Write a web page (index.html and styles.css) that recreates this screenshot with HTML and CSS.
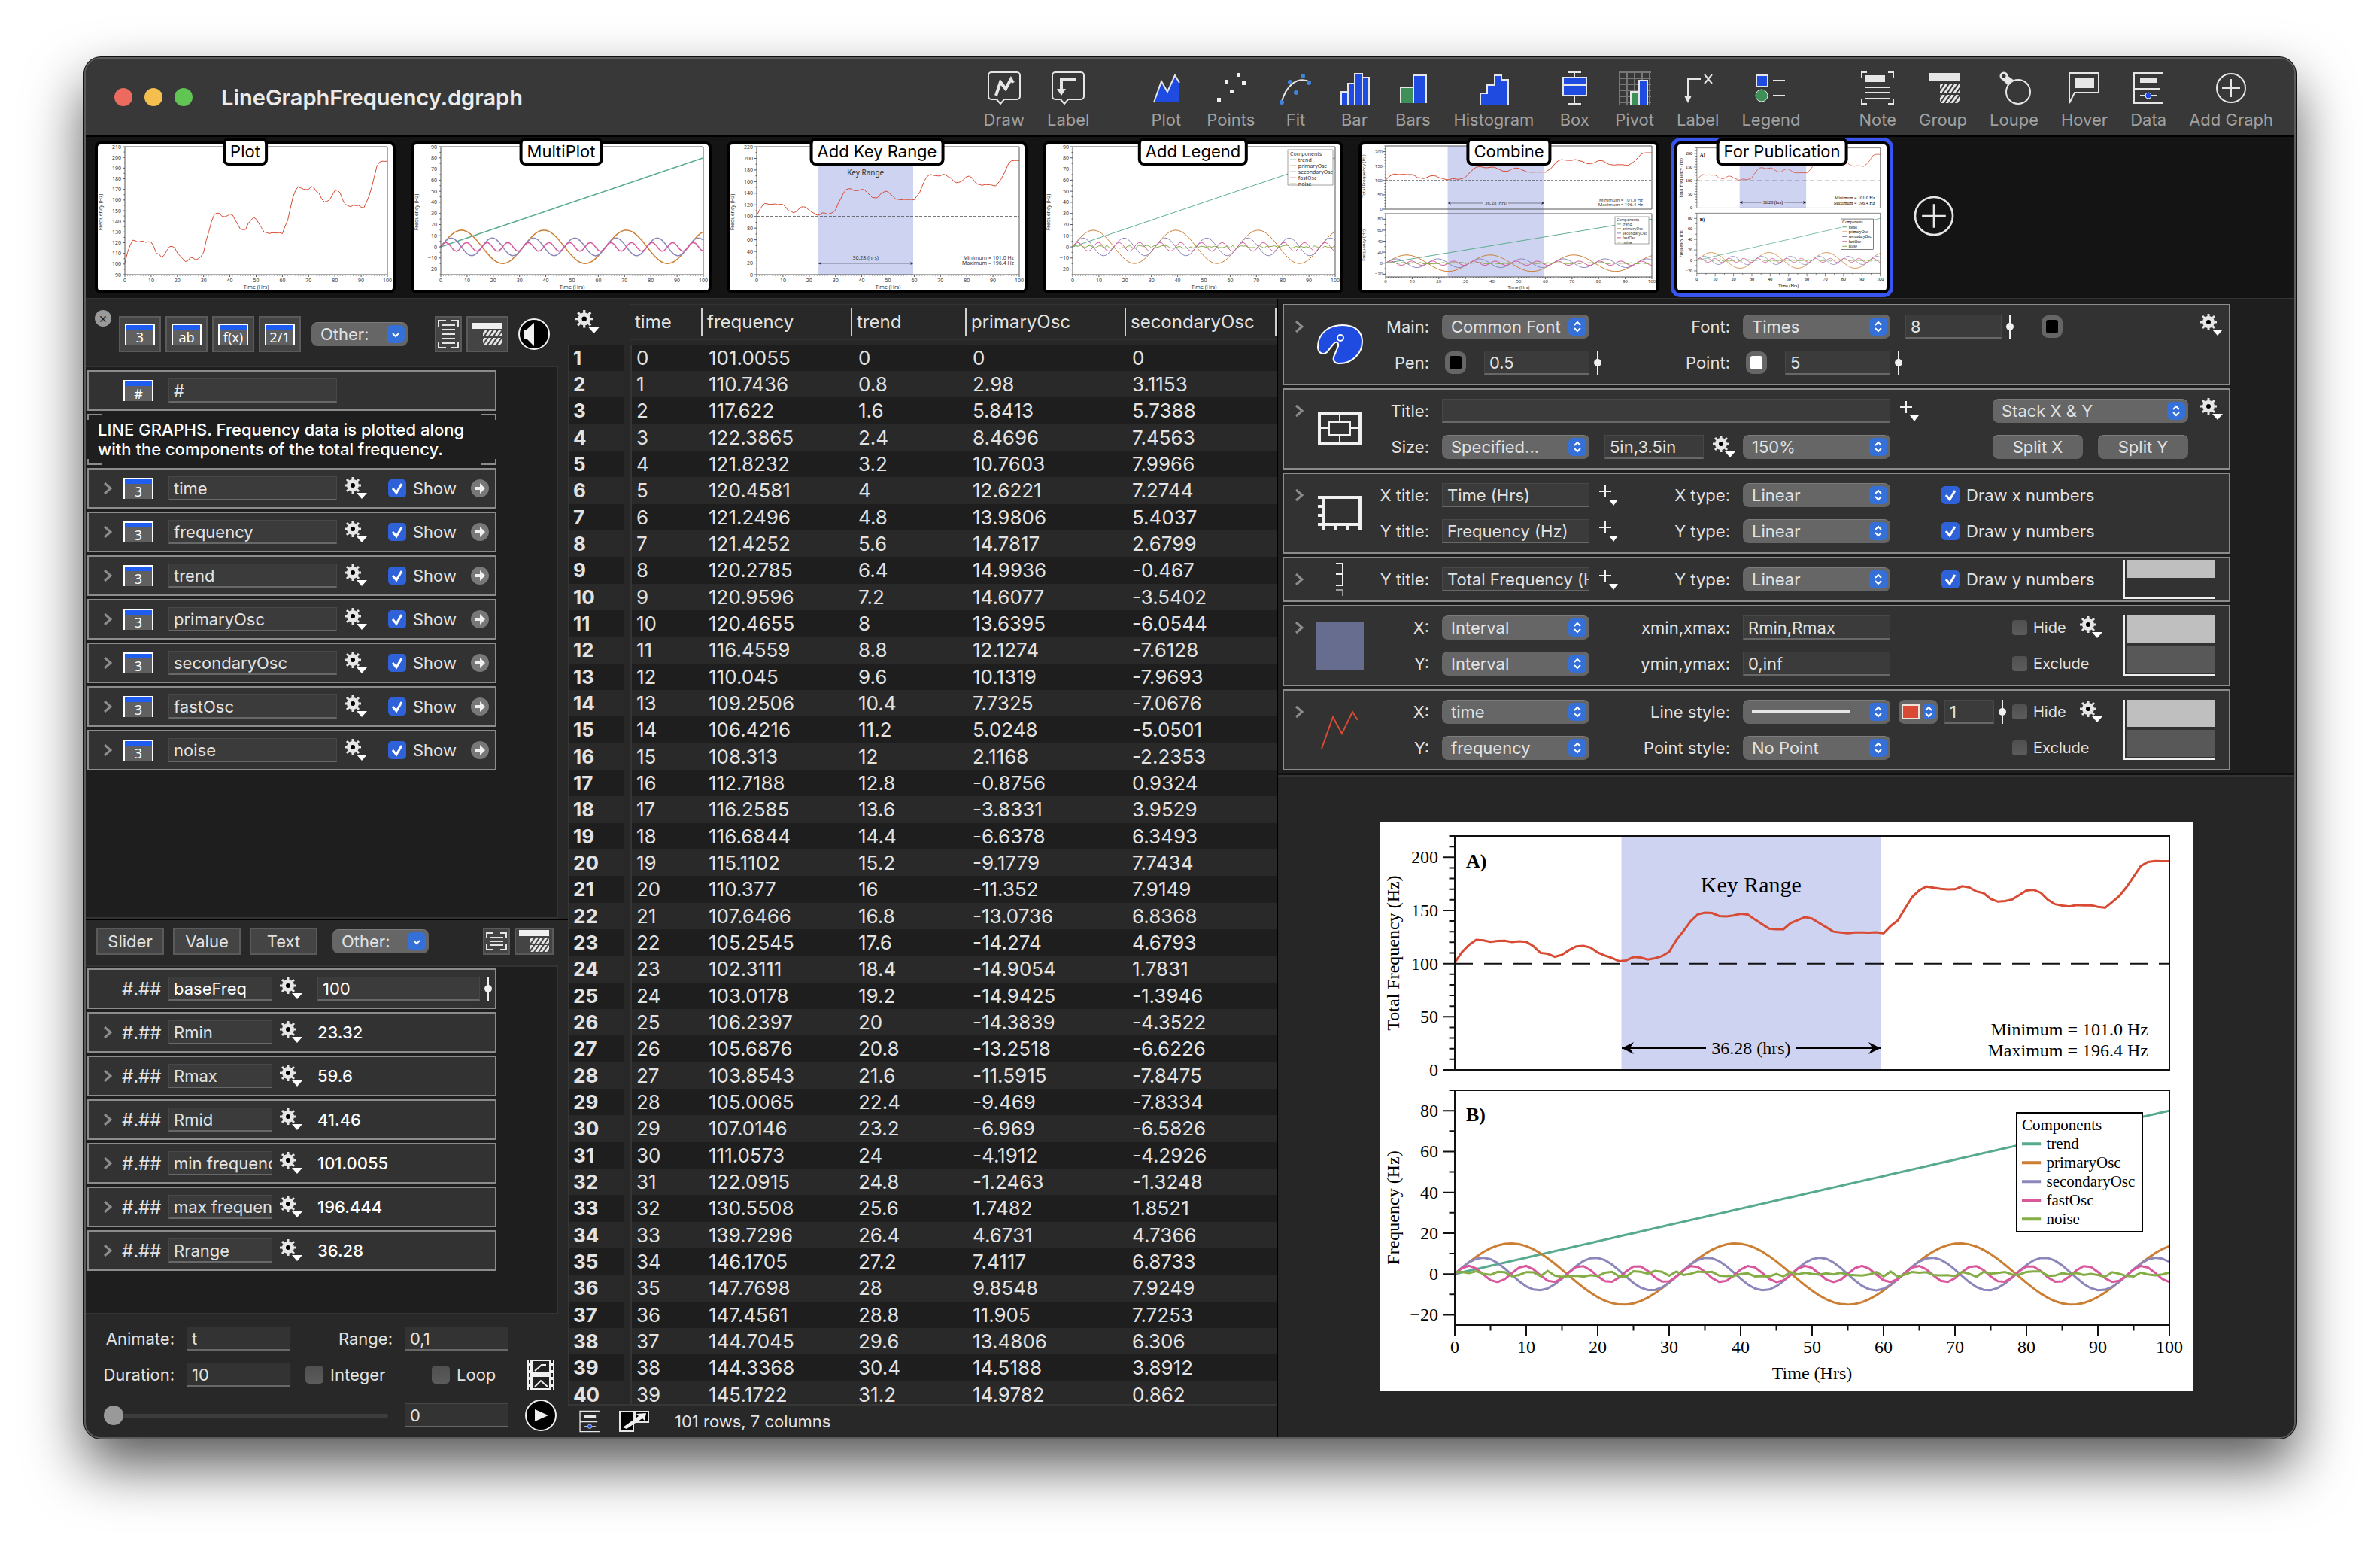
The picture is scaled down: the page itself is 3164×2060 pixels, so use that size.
FILE: index.html
```html
<!DOCTYPE html>
<html lang="en">
<head>
	<meta charset="utf-8">
	<meta name="viewport" content="width=device-width, initial-scale=1">
	<title>LineGraphFrequency.dgraph</title>
	<link rel="stylesheet" href="styles.css">
</head>
<body>

<!-- Icon library, used all over the place with <use> -->
<svg class="library" width="0" height="0">
	<defs>
		<pattern id="hatch" width="5" height="5" patternUnits="userSpaceOnUse" patternTransform="rotate(35)">
			<rect width="3" height="5" fill="#e6e6e6"/>
		</pattern>
	</defs>
	<symbol id="i-draw" viewBox="0 0 44 44">
		<path d="M5 1H39a4 4 0 0 1 4 4V33a4 4 0 0 1-4 4H22l-5 6-5-6H5a4 4 0 0 1-4-4V5a4 4 0 0 1 4-4z" fill="none" stroke="#e6e6e6" stroke-width="2"/>
		<path d="M11 32L17 14l7 9 7-13 3 5" fill="none" stroke="#e6e6e6" stroke-width="4"/>
	</symbol>
	<symbol id="i-callout" viewBox="0 0 44 44">
		<path d="M5 1H39a4 4 0 0 1 4 4V33a4 4 0 0 1-4 4H22l-5 6-5-6H5a4 4 0 0 1-4-4V5a4 4 0 0 1 4-4z" fill="none" stroke="#e6e6e6" stroke-width="2"/>
		<path d="M32 11H13V25" fill="none" stroke="#e6e6e6" stroke-width="4"/>
		<path d="M7 23H19L13 32z" fill="#e6e6e6"/>
	</symbol>
	<symbol id="i-plot" viewBox="0 0 44 44">
		<path d="M6 41L16 13l8 14L34 5l6 10V41z" fill="#1f4be0"/>
		<path d="M6 41L16 13l8 14L34 5l6 10" fill="none" stroke="#e6e6e6" stroke-width="2"/>
	</symbol>
	<symbol id="i-points" viewBox="0 0 44 44">
		<path d="M30 2h5v5h-5zM14 11h5v5h-5zM37 13h5v5h-5zM21 24h5v5h-5zM4 35h5v5h-5z" fill="#f0f0f0"/>
	</symbol>
	<symbol id="i-fit" viewBox="0 0 44 44">
		<path d="M3 43C10 16 26 6 42 14" fill="none" stroke="#e6e6e6" stroke-width="2"/>
		<g fill="#3f85e0"><circle cx="32" cy="6" r="3"/><circle cx="15" cy="14" r="3"/><circle cx="23" cy="28" r="3"/><circle cx="4" cy="41" r="3"/><circle cx="40" cy="15" r="3"/></g>
	</symbol>
	<symbol id="i-bar" viewBox="0 0 44 44">
		<path d="M5 44V27h9v17M14 44V16h9v28M23 44V3h10v41M33 44V8h9v36" fill="#1f4be0" stroke="#e6e6e6" stroke-width="2"/>
	</symbol>
	<symbol id="i-bars" viewBox="0 0 44 44">
		<path d="M6 42V21H23v21" fill="#3f8f58" stroke="#e6e6e6" stroke-width="2"/>
		<path d="M23 42V5H40v37" fill="#1f4be0" stroke="#e6e6e6" stroke-width="2"/>
	</symbol>
	<symbol id="i-histogram" viewBox="0 0 44 44">
		<path d="M4 44V29h9V18h10V5h9v6h9v33" fill="#1f4be0" stroke="#e6e6e6" stroke-width="2"/>
	</symbol>
	<symbol id="i-box" viewBox="0 0 44 44">
		<path d="M14 1H31M22 1V8M22 32V43M14 43H31" stroke="#e6e6e6" stroke-width="2"/>
		<path d="M7 8H38V32H7zM7 18H38" fill="#1f4be0" stroke="#e6e6e6" stroke-width="2"/>
	</symbol>
	<symbol id="i-pivot" viewBox="0 0 44 44">
		<path d="M2 0V44M12 0V44M22 0V44M32 0V44M42 0V44M2 1H44M2 9H44M2 17H44M2 25H44M2 33H44M2 41H44" stroke="#777" stroke-width="2"/>
		<path d="M17 44V27H28v17" fill="#3f8f58" stroke="#e6e6e6" stroke-width="2"/>
		<path d="M28 44V12H39v32" fill="#1f4be0" stroke="#e6e6e6" stroke-width="2"/>
	</symbol>
	<symbol id="i-axis-label" viewBox="0 0 44 44">
		<path d="M26 10H9V33" fill="none" stroke="#e6e6e6" stroke-width="2"/>
		<path d="M4 32H14L9 42z" fill="#e6e6e6"/>
		<path d="M31 4L41 16M41 4L31 16" stroke="#e6e6e6" stroke-width="2"/>
	</symbol>
	<symbol id="i-legend" viewBox="0 0 44 44">
		<path d="M3 5H18V20H3z" fill="#1f4be0" stroke="#e6e6e6" stroke-width="2"/>
		<circle cx="10" cy="32" r="8" fill="#3f8f58" stroke="#e6e6e6" stroke-width="1"/>
		<path d="M25 12H41M25 32H41" stroke="#e6e6e6" stroke-width="2"/>
	</symbol>
	<symbol id="i-note" viewBox="0 0 44 44">
		<path d="M1 8V1H8M36 1h7V8M1 36v7H8M43 36v7H36" fill="none" stroke="#e6e6e6" stroke-width="2"/>
		<path d="M6 5H32V14H6z" fill="#e6e6e6"/>
		<path d="M6 21H38M6 28H38M6 36H38" stroke="#e6e6e6" stroke-width="2"/>
	</symbol>
	<symbol id="i-group" viewBox="0 0 44 44">
		<path d="M3 2H44V13H3z" fill="#e6e6e6"/>
		<path d="M18 17H44V28H18zM18 31H44V42H18z" fill="url(#hatch)"/>
	</symbol>
	<symbol id="i-loupe" viewBox="0 0 44 44">
		<path d="M4 9L14 19L22 12L12 5z" fill="#e6e6e6"/>
		<circle cx="8" cy="6" r="4" fill="#383838" stroke="#e6e6e6" stroke-width="3"/>
		<circle cx="27" cy="27" r="16" fill="#383838" stroke="#e6e6e6" stroke-width="2"/>
	</symbol>
	<symbol id="i-hover" viewBox="0 0 44 44">
		<path d="M2 42V2H41V28H9z" fill="none" stroke="#e6e6e6" stroke-width="2"/>
		<path d="M10 9H35V22H10z" fill="#e6e6e6"/>
	</symbol>
	<symbol id="i-data" viewBox="0 0 44 44">
		<path d="M41 2H3V42H41M3 23H37M11 32H34" fill="none" stroke="#e6e6e6" stroke-width="2"/>
		<path d="M11 9H34V15H11z" fill="#e6e6e6"/>
		<circle cx="22" cy="32" r="4" fill="#1f4be0" stroke="#e6e6e6"/>
	</symbol>
	<symbol id="i-add" viewBox="0 0 44 44">
		<circle cx="22" cy="22" r="19" fill="none" stroke="#e6e6e6" stroke-width="2"/>
		<path d="M10 22H34M22 10V34" stroke="#e6e6e6" stroke-width="2"/>
	</symbol>
	<symbol id="i-gear" viewBox="0 0 30 30">
		<path d="M11 0V22M0 11H22M3 3L19 19M19 3L3 19" stroke="#e6e6e6" stroke-width="3"/>
		<circle cx="11" cy="11" r="8" fill="#e6e6e6"/>
		<circle cx="11" cy="11" r="3" fill="#000"/>
		<path d="M16 21H30L23 29z" fill="#fff"/>
	</symbol>
	<symbol id="i-plus" viewBox="0 0 26 28">
		<path d="M8 1V17M0 9H16" stroke="#f0f0f0" stroke-width="2"/>
		<path d="M13 20H25L19 28z" fill="#fff"/>
	</symbol>
	<symbol id="i-chevron" viewBox="0 0 12 18">
		<path d="M2 2L10 9L2 16" fill="none" stroke="#8c8c8c" stroke-width="3"/>
	</symbol>
	<symbol id="i-handle" viewBox="0 0 12 32">
		<path d="M6 0V32" stroke="#f0f0f0" stroke-width="2"/>
		<circle cx="6" cy="16" r="5" fill="#f0f0f0"/>
	</symbol>
	<symbol id="i-goto" viewBox="0 0 24 24">
		<circle cx="12" cy="12" r="12" fill="#787878"/>
		<path d="M6 10H12V5L19 12L12 19V14H6z" fill="#f0f0f0"/>
	</symbol>
	<symbol id="i-lines" viewBox="0 0 28 38">
		<path d="M1 9V1H11M17 1H27V9M1 29V37H11M17 37H27V29M5 7H23M5 13H23M5 19H23M5 25H23M5 31H23" fill="none" stroke="#e6e6e6" stroke-width="2"/>
	</symbol>
	<symbol id="i-lines-small" viewBox="0 0 28 24">
		<path d="M1 8V1H9M19 1H27V8M1 16V23H9M19 23H27V16M5 7H23M5 12H23M5 17H23" fill="none" stroke="#e6e6e6" stroke-width="2"/>
	</symbol>
	<symbol id="i-folder" viewBox="0 0 42 30">
		<path d="M1 0H41V8H1z" fill="#f0f0f0"/>
		<path d="M15 10H41V18H15zM15 20H41V29H15z" fill="url(#hatch)"/>
	</symbol>
	<symbol id="i-sound" viewBox="0 0 44 44">
		<circle cx="22" cy="22" r="20" fill="#000" stroke="#f0f0f0" stroke-width="2"/>
		<path d="M9 16H12L22 7V38L12 28H9z" fill="#f0f0f0"/>
	</symbol>
	<symbol id="i-play" viewBox="0 0 44 44">
		<circle cx="22" cy="22" r="20" fill="#000" stroke="#f0f0f0" stroke-width="2"/>
		<path d="M14 14L32 22L14 30z" fill="#f0f0f0"/>
	</symbol>
	<symbol id="i-film" viewBox="0 0 36 40">
		<path d="M0 0H36V40H0z" fill="#f0f0f0"/>
		<path d="M7 2H29V17H7zM7 23H29V38H7z" fill="#222"/>
		<path d="M2 0H4V5H2zM2 9H4V14H2zM2 18H4V23H2zM2 27H4V32H2zM2 36H4V40H2zM32 0H34V5H32zM32 9H34V14H32zM32 18H34V23H32zM32 27H34V32H32zM32 36H34V40H32z" fill="#222"/>
		<path d="M10 15L19 7H25M10 36L18 28L27 36" fill="none" stroke="#f0f0f0" stroke-width="2"/>
	</symbol>
	<symbol id="i-export" viewBox="0 0 40 28">
		<path d="M1 1H19V27H1zM21 1H39V15H21z" fill="#000" stroke="#e6e6e6" stroke-width="2"/>
		<path d="M5 22L26 7L23 4L36 3L34 13L31 10L10 24z" fill="#f0f0f0"/>
	</symbol>
</svg>

<div class="window">

	<header class="titlebar">
		<span class="light red"></span>
		<span class="light yellow"></span>
		<span class="light green"></span>
		<h1 class="doc-title">LineGraphFrequency.dgraph</h1>
		<nav class="tools">
			<div class="tool-group">
				<button class="tool"><svg><use href="#i-draw"/></svg>Draw</button>
				<button class="tool"><svg><use href="#i-callout"/></svg>Label</button>
			</div>
			<div class="tool-group">
				<button class="tool"><svg><use href="#i-plot"/></svg>Plot</button>
				<button class="tool"><svg><use href="#i-points"/></svg>Points</button>
				<button class="tool"><svg><use href="#i-fit"/></svg>Fit</button>
				<button class="tool"><svg><use href="#i-bar"/></svg>Bar</button>
				<button class="tool"><svg><use href="#i-bars"/></svg>Bars</button>
				<button class="tool"><svg><use href="#i-histogram"/></svg>Histogram</button>
				<button class="tool"><svg><use href="#i-box"/></svg>Box</button>
				<button class="tool"><svg><use href="#i-pivot"/></svg>Pivot</button>
				<button class="tool"><svg><use href="#i-axis-label"/></svg>Label</button>
				<button class="tool"><svg><use href="#i-legend"/></svg>Legend</button>
			</div>
			<div class="tool-group">
				<button class="tool"><svg><use href="#i-note"/></svg>Note</button>
				<button class="tool"><svg><use href="#i-group"/></svg>Group</button>
				<button class="tool"><svg><use href="#i-loupe"/></svg>Loupe</button>
				<button class="tool"><svg><use href="#i-hover"/></svg>Hover</button>
				<button class="tool"><svg><use href="#i-data"/></svg>Data</button>
				<button class="tool"><svg><use href="#i-add"/></svg>Add Graph</button>
			</div>
		</nav>
	</header>

	<div class="strip">
		<button class="thumb"><span class="thumb-name">Plot</span><svg id="thumb-plot" viewBox="0 0 392 194"></svg></button>
		<button class="thumb"><span class="thumb-name">MultiPlot</span><svg id="thumb-multi" viewBox="0 0 392 194"></svg></button>
		<button class="thumb"><span class="thumb-name">Add Key Range</span><svg id="thumb-range" viewBox="0 0 392 194"></svg></button>
		<button class="thumb"><span class="thumb-name">Add Legend</span><svg id="thumb-legend" viewBox="0 0 392 194"></svg></button>
		<button class="thumb"><span class="thumb-name">Combine</span><svg id="thumb-combine" viewBox="0 0 392 194"></svg></button>
		<button class="thumb selected"><span class="thumb-name">For Publication</span><svg id="thumb-final" viewBox="0 0 1080 756"></svg></button>
		<button class="add-thumb" aria-label="Add graph"><svg><use href="#i-add"/></svg></button>
	</div>

	<main class="panes">

		<!-- Left: columns, variables, animation -->
		<section class="side">
			<div class="side-bar tall">
				<button class="close" aria-label="Close">&#10005;</button>
				<button class="flat square"><span class="col-icon">3</span></button>
				<button class="flat square"><span class="col-icon">ab</span></button>
				<button class="flat square"><span class="col-icon">f(x)</span></button>
				<button class="flat square"><span class="col-icon">2/1</span></button>
				<select class="pull other" aria-label="Other column types"><option>Other:</option></select>
				<button class="flat narrow"><svg width="28" height="38"><use href="#i-lines"/></svg></button>
				<button class="flat square"><svg width="42" height="30"><use href="#i-folder"/></svg></button>
				<button class="bare sound"><svg width="44" height="44"><use href="#i-sound"/></svg></button>
			</div>
			<div class="list grow" id="columns">
				<div class="item">
					<span></span>
					<span class="col-icon">#</span>
					<input type="text" value="#" aria-label="Row number column">
				</div>
				<p class="note">LINE GRAPHS. Frequency data is plotted along with the components of the total frequency.</p>
			</div>

			<div class="side-bar short">
				<button class="flat text">Slider</button>
				<button class="flat text">Value</button>
				<button class="flat text">Text</button>
				<select class="pull other" aria-label="Other variable types"><option>Other:</option></select>
				<button class="flat narrow"><svg width="28" height="24"><use href="#i-lines-small"/></svg></button>
				<button class="flat medium"><svg width="42" height="30"><use href="#i-folder"/></svg></button>
			</div>
			<div class="list vars" id="variables">
				<div class="item">
					<span></span>
					<span class="hash">#.##</span>
					<input type="text" class="bright" value="baseFreq" aria-label="Variable name">
					<button class="bare gear"><svg width="30" height="30"><use href="#i-gear"/></svg></button>
					<input type="text" class="bright" value="100" aria-label="Variable value">
					<svg class="handle"><use href="#i-handle"/></svg>
				</div>
			</div>

			<div class="animate">
				<label for="an-var">Animate:</label>
				<input type="text" id="an-var" value="t">
				<label for="an-range">Range:</label>
				<input type="text" id="an-range" value="0,1">
				<span></span>
				<label for="an-time">Duration:</label>
				<input type="text" id="an-time" value="10">
				<div class="checks">
					<label class="check"><input type="checkbox">Integer</label>
					<label class="check"><input type="checkbox">Loop</label>
				</div>
				<button class="bare"><svg width="36" height="40"><use href="#i-film"/></svg></button>
				<input type="range" class="track" value="0" aria-label="Animation position">
				<input type="text" value="0" aria-label="Animation value">
				<button class="bare"><svg width="44" height="44"><use href="#i-play"/></svg></button>
			</div>
		</section>

		<!-- Middle: data table -->
		<section class="data">
			<div class="table-wrap">
				<table>
					<thead>
						<tr>
							<td><button class="bare"><svg width="32" height="32"><use href="#i-gear"/></svg></button></td>
							<th class="c-time"><span>time</span></th>
							<th class="c-freq"><span>frequency</span></th>
							<th class="c-trend"><span>trend</span></th>
							<th class="c-prim"><span>primaryOsc</span></th>
							<th class="c-sec"><span>secondaryOsc</span></th>
						</tr>
					</thead>
					<tbody id="rows"></tbody>
				</table>
			</div>
			<div class="status">
				<button class="bare"><svg width="30" height="30"><use href="#i-data"/></svg></button>
				<button class="bare"><svg width="40" height="28"><use href="#i-export"/></svg></button>
				<span>101 rows, 7 columns</span>
			</div>
		</section>

		<!-- Right: inspector and graph -->
		<section class="graph-pane">
			<div class="inspector">

				<div class="card">
					<button class="bare chevron"><svg width="12" height="18"><use href="#i-chevron"/></svg></button>
					<svg class="card-icon" width="62" height="54" viewBox="-1 -1 62 54">
						<path d="M34 0C52 0 60 10 60 22C60 38 46 51 30 51C22 51 20 46 23 40L28 28C29 23 25 21 22 25L13 36C9 40 1 38 1 29C1 12 14 0 34 0z" fill="#1f4be0" stroke="#fff" stroke-width="2"/>
						<circle cx="31" cy="17" r="4" fill="#1f4be0" stroke="#fff" stroke-width="2"/>
					</svg>
					<label class="l1" for="main">Main:</label>
					<select class="pull c1" id="main"><option>Common Font</option></select>
					<label class="l2" for="font">Font:</label>
					<select class="pull c2" id="font"><option>Times</option></select>
					<div class="rest">
						<input type="text" class="w128" value="8" aria-label="Font size">
						<svg class="handle"><use href="#i-handle"/></svg>
						<button class="well black" aria-label="Font colour"></button>
						<button class="bare corner"><svg width="30" height="30"><use href="#i-gear"/></svg></button>
					</div>
					<label class="l1 r2" for="pen">Pen:</label>
					<div class="c1 pair r2"><button class="well black" aria-label="Pen colour"></button><input type="text" id="pen" value="0.5"></div>
					<div class="l2 r2 with-tool"><svg class="handle"><use href="#i-handle"/></svg><label for="point">Point:</label></div>
					<div class="c2 pair r2"><button class="well white" aria-label="Point colour"></button><input type="text" id="point" value="5"></div>
					<div class="rest r2"><svg class="handle near"><use href="#i-handle"/></svg></div>
				</div>

				<div class="card">
					<button class="bare chevron"><svg width="12" height="18"><use href="#i-chevron"/></svg></button>
					<svg class="card-icon" width="58" height="44" viewBox="0 0 58 44">
						<path d="M2 2H56V42H2z" fill="none" stroke="#f0f0f0" stroke-width="4"/>
						<path d="M15 13H43V30H15zM29 2V13M29 30V42M2 21H15M43 21H56" fill="none" stroke="#f0f0f0" stroke-width="2"/>
					</svg>
					<label class="l1" for="title">Title:</label>
					<input type="text" class="wide" id="title" value="">
					<div class="rest">
						<svg class="plus near"><use href="#i-plus"/></svg>
						<select class="pull stack" aria-label="Layout"><option>Stack X &amp; Y</option></select>
						<button class="bare corner"><svg width="30" height="30"><use href="#i-gear"/></svg></button>
					</div>
					<label class="l1 r2" for="size">Size:</label>
					<select class="pull c1 r2" id="size"><option>Specified...</option></select>
					<div class="l2 r2 sizes"><input type="text" value="5in,3.5in" aria-label="Paper size"><button class="bare"><svg width="30" height="30"><use href="#i-gear"/></svg></button></div>
					<select class="pull c2 r2" aria-label="Zoom"><option>150%</option></select>
					<div class="rest r2 splits"><button class="push">Split X</button><button class="push">Split Y</button></div>
				</div>

				<div class="card">
					<button class="bare chevron"><svg width="12" height="18"><use href="#i-chevron"/></svg></button>
					<svg class="card-icon" width="58" height="46" viewBox="0 0 58 46">
						<path d="M8 2H56V46M8 0V46M0 38H58M0 2H8M0 14H8M0 26H8M24 38V46M40 38V46" fill="none" stroke="#f0f0f0" stroke-width="4"/>
					</svg>
					<label class="l1" for="xt">X title:</label>
					<input type="text" class="c1" id="xt" value="Time (Hrs)">
					<div class="l2 with-tool"><svg class="plus"><use href="#i-plus"/></svg><label for="xtype">X type:</label></div>
					<select class="pull c2" id="xtype"><option>Linear</option></select>
					<div class="rest"><label class="check far"><input type="checkbox" checked>Draw x numbers</label></div>
					<label class="l1 r2" for="yt">Y title:</label>
					<input type="text" class="c1 r2" id="yt" value="Frequency (Hz)">
					<div class="l2 r2 with-tool"><svg class="plus"><use href="#i-plus"/></svg><label for="ytype">Y type:</label></div>
					<select class="pull c2 r2" id="ytype"><option>Linear</option></select>
					<div class="rest r2"><label class="check far"><input type="checkbox" checked>Draw y numbers</label></div>
				</div>

				<div class="card single">
					<button class="bare chevron"><svg width="12" height="18"><use href="#i-chevron"/></svg></button>
					<svg class="card-icon" width="10" height="44" viewBox="0 0 10 44">
						<path d="M0 1H9V30H0M0 15H9" fill="none" stroke="#f0f0f0" stroke-width="2"/>
						<path d="M0 36H9V44" fill="none" stroke="#999" stroke-width="2"/>
					</svg>
					<label class="l1" for="yt2">Y title:</label>
					<input type="text" class="c1" id="yt2" value="Total Frequency (Hz)">
					<div class="l2 with-tool"><svg class="plus"><use href="#i-plus"/></svg><label for="ytype2">Y type:</label></div>
					<select class="pull c2" id="ytype2"><option>Linear</option></select>
					<div class="rest"><label class="check far"><input type="checkbox" checked>Draw y numbers</label></div>
					<div class="where"><i class="on"></i></div>
				</div>

				<div class="card">
					<button class="bare chevron"><svg width="12" height="18"><use href="#i-chevron"/></svg></button>
					<span class="card-icon swatch"></span>
					<label class="l1" for="ix">X:</label>
					<select class="pull c1" id="ix"><option>Interval</option></select>
					<label class="l2" for="xmm">xmin,xmax:</label>
					<input type="text" class="c2" id="xmm" value="Rmin,Rmax">
					<div class="rest hide-row"><label class="check small"><input type="checkbox">Hide</label><button class="bare"><svg width="30" height="30"><use href="#i-gear"/></svg></button></div>
					<label class="l1 r2" for="iy">Y:</label>
					<select class="pull c1 r2" id="iy"><option>Interval</option></select>
					<label class="l2 r2" for="ymm">ymin,ymax:</label>
					<input type="text" class="c2 r2" id="ymm" value="0,inf">
					<div class="rest r2 hide-row"><label class="check small"><input type="checkbox">Exclude</label></div>
					<div class="where"><i class="on"></i><i></i></div>
				</div>

				<div class="card">
					<button class="bare chevron"><svg width="12" height="18"><use href="#i-chevron"/></svg></button>
					<svg class="card-icon" width="50" height="52" viewBox="0 0 50 52">
						<path d="M1 51L16 9L28 31L42 2L49 13" fill="none" stroke="#d84a33" stroke-width="2"/>
					</svg>
					<label class="l1" for="px">X:</label>
					<select class="pull c1" id="px"><option>time</option></select>
					<label class="l2" for="ls">Line style:</label>
					<select class="pull c2 solid" id="ls"><option label=" "></option></select>
					<div class="rest">
						<button class="color-pop" aria-label="Line colour"><i></i><b></b></button>
						<input type="text" class="w66" value="1" aria-label="Line width">
						<svg class="handle"><use href="#i-handle"/></svg>
						<label class="check small"><input type="checkbox">Hide</label>
						<button class="bare gear-end"><svg width="30" height="30"><use href="#i-gear"/></svg></button>
					</div>
					<label class="l1 r2" for="py">Y:</label>
					<select class="pull c1 r2" id="py"><option>frequency</option></select>
					<label class="l2 r2" for="ps">Point style:</label>
					<select class="pull c2 r2" id="ps"><option>No Point</option></select>
					<div class="rest r2 hide-row"><label class="check small"><input type="checkbox">Exclude</label></div>
					<div class="where"><i class="on"></i><i></i></div>
				</div>
			</div>

			<div class="canvas">
				<svg class="paper" id="paper" viewBox="0 0 1080 756"></svg>
			</div>
		</section>
	</main>
</div>

<script src="graph.js"></script>
</body>
</html>
```

FILE: styles.css
```css
:root {
	--text: #e2e2e2;
	--panel: #282828;
	--well: #1e1e1e;
	--row: #323232;
	--line: #8c8c8c;
	--blue: #2f62d9;
}

* {
	box-sizing: border-box;
}

body {
	margin: 0;
	height: 100vh;
	padding: 76px 112px 148px;
	background: white;
	color: var(--text);
	font-family: Inter, "Liberation Sans", sans-serif;
	font-size: 22px;
}

button, input, select {
	font: inherit;
	color: inherit;
	margin: 0;
}

button {
	display: flex;
	align-items: center;
	justify-content: center;
	padding: 0;
	border: none;
	background: none;
}

svg {
	display: block;
	flex: none;
}

.library {
	position: absolute;
}

/* Window and title bar */
.window {
	height: 100%;
	display: flex;
	flex-direction: column;
	border: 2px solid #5c5c5c;
	border-radius: 22px;
	overflow: hidden;
	background: var(--panel);
	box-shadow: 0 0 0 1px #111, 0 36px 76px rgba(0, 0, 0, 0.66);
}

.titlebar {
	flex: none;
	display: flex;
	align-items: center;
	gap: 16px;
	height: 104px;
	padding: 0 28px 0 38px;
	background: #383838;
	border-bottom: 2px solid black;
}

.light {
	width: 24px;
	height: 24px;
	border-radius: 50%;
}

.red { background: #ec6a5e; }
.yellow { background: #f4bf4f; }
.green { background: #61c554; }

.doc-title {
	margin: 0 0 0 22px;
	font-size: 29px;
	font-weight: 600;
	color: #ebebeb;
}

.tools {
	margin-left: auto;
	padding-top: 10px;
	display: flex;
	gap: 78px;
}

.tool-group {
	display: flex;
	gap: 30px;
}

.tool {
	flex-direction: column;
	gap: 6px;
	min-width: 48px;
	color: #a0a0a0;
	line-height: 28px;
}

.tool svg {
	width: 44px;
	height: 44px;
}

/* Graph thumbnails */
.strip {
	flex: none;
	display: flex;
	align-items: center;
	gap: 20px;
	height: 216px;
	padding: 0 12px;
	background: #141414;
	border-bottom: 2px solid #333;
}

.thumb {
	position: relative;
	border: 4px solid black;
	border-radius: 8px;
	background: white;
}

.thumb svg {
	width: 392px;
	height: 194px;
	border-radius: 4px;
}

.thumb.selected {
	box-shadow: 0 0 0 5px #3855f0;
}

.thumb.selected svg {
	width: 278px;
}

.thumb-name {
	position: absolute;
	top: -9px;
	left: 50%;
	transform: translateX(-50%);
	padding: 0 6px;
	border: 4px solid black;
	border-radius: 8px;
	background: white;
	color: black;
	line-height: 29px;
	white-space: nowrap;
}

.add-thumb {
	margin: 0 0 4px 10px;
}

.add-thumb svg {
	width: 58px;
	height: 58px;
}

/* The three panes */
.panes {
	flex: 1;
	min-height: 0;
	display: grid;
	grid-template-columns: 641px 944px 1fr;
}

.side, .data, .graph-pane {
	display: flex;
	flex-direction: column;
	min-width: 0;
	min-height: 0;
}

.side-bar {
	flex: none;
	display: flex;
	align-items: center;
}

.side-bar.tall {
	height: 88px;
	padding: 4px 0 0 12px;
	gap: 6px;
}

.side-bar.short {
	height: 62px;
	padding: 0 0 4px 14px;
	gap: 12px;
	border-top: 2px solid black;
}

.close {
	align-self: flex-start;
	width: 22px;
	height: 22px;
	margin: 10px 4px 0 0;
	border-radius: 50%;
	background: #9a9a9a;
	color: #222;
	font-size: 14px;
}

.flat {
	border: 2px solid #5a5a5a;
	background: #444;
}

.flat.square {
	width: 56px;
	height: 48px;
}

.flat.narrow {
	width: 36px;
	height: 48px;
	margin-left: 30px;
}

.short .flat.narrow {
	height: 36px;
	margin: 0 -6px 0 60px;
}

.flat.medium {
	width: 52px;
	height: 36px;
}

.flat.text {
	width: 90px;
	height: 36px;
}

.col-icon {
	width: 40px;
	height: 28px;
	border: 2px solid white;
	border-bottom: none;
	background: linear-gradient(#1f5cf0 6px, #606060 6px);
	color: white;
	font-family: "Noto Sans", sans-serif;
	font-size: 18px;
	line-height: 32px;
	text-align: center;
	white-space: nowrap;
}

.sound {
	margin-left: 6px;
}

/* Form controls */
input[type=text] {
	min-width: 0;
	height: 32px;
	padding: 0 0 0 6px;
	border: 1px solid #474747;
	border-bottom: 2px solid #686868;
	border-radius: 0;
	background: #3b3b3b;
	outline: none;
}

.pull {
	appearance: none;
	height: 32px;
	padding: 0 32px 0 12px;
	border: none;
	border-radius: 8px;
	background: #666 url("data:image/svg+xml,%3Csvg xmlns='http://www.w3.org/2000/svg' width='24' height='24'%3E%3Crect width='24' height='24' rx='6' fill='%233470d8'/%3E%3Cpath d='M8 10L12 6L16 10M8 14L12 18L16 14' fill='none' stroke='white' stroke-width='2'/%3E%3C/svg%3E") no-repeat right 4px center;
	box-shadow: inset 0 1px 0 #7c7c7c;
}

.pull.other {
	width: 128px;
	margin-left: 8px;
	background-image: url("data:image/svg+xml,%3Csvg xmlns='http://www.w3.org/2000/svg' width='24' height='24'%3E%3Crect width='24' height='24' rx='6' fill='%233470d8'/%3E%3Cpath d='M8 11L12 15L16 11' fill='none' stroke='white' stroke-width='2'/%3E%3C/svg%3E");
}

.push {
	width: 120px;
	height: 32px;
	border-radius: 8px;
	background: #646464;
	box-shadow: inset 0 1px 0 #7c7c7c;
}

.check {
	display: flex;
	align-items: center;
	gap: 9px;
	white-space: nowrap;
}

input[type=checkbox] {
	appearance: none;
	flex: none;
	width: 24px;
	height: 24px;
	border-radius: 5px;
	background: linear-gradient(#505050, #5c5c5c);
}

input[type=checkbox]:checked {
	background: var(--blue) url("data:image/svg+xml,%3Csvg xmlns='http://www.w3.org/2000/svg' width='24' height='24'%3E%3Cpath d='M6 12L11 18L18 6' fill='none' stroke='white' stroke-width='3'/%3E%3C/svg%3E");
}

.check.small {
	gap: 8px;
	font-size: 20px;
}

.small input[type=checkbox] {
	width: 20px;
	height: 20px;
	border-radius: 4px;
}

.well {
	width: 28px;
	height: 30px;
	border: 6px solid #666;
	border-radius: 9px;
}

.black { background: black; }
.white { background: white; }

.handle {
	width: 12px;
	height: 32px;
}

.plus {
	width: 26px;
	height: 28px;
}

/* Lists on the left */
.list {
	display: flex;
	flex-direction: column;
	gap: 4px;
	padding: 4px 80px 4px 2px;
	margin-right: 13px;
	background: var(--well);
	border: 2px solid #333;
	border-left: none;
	overflow: hidden;
}

.grow {
	flex: 1;
}

.vars {
	flex: none;
	height: 464px;
	padding-top: 2px;
}

.item {
	flex: none;
	display: grid;
	grid-template-columns: 46px 60px 224px 68px 110px 1fr;
	align-items: center;
	height: 54px;
	border: 2px solid var(--line);
	background: var(--row);
}

.vars .item {
	grid-template-columns: 44px 62px 138px 60px 216px 1fr;
}

.item .bare {
	justify-content: start;
}

.item .chevron {
	padding-left: 19px;
}

.item .gear {
	padding-left: 10px;
}

.item .hash {
	font-size: 24px;
}

.item .value {
	color: white;
	font-weight: 500;
}

.item .handle {
	margin-left: 5px;
}

.bright {
	color: white;
}

.note {
	flex: none;
	height: 68px;
	margin: 0;
	padding: 8px 14px;
	color: white;
	font-weight: 500;
	line-height: 26px;
	background:
		linear-gradient(var(--line), var(--line)) 0 0 / 20px 2px,
		linear-gradient(var(--line), var(--line)) 0 0 / 2px 8px,
		linear-gradient(var(--line), var(--line)) 100% 0 / 20px 2px,
		linear-gradient(var(--line), var(--line)) 100% 0 / 2px 8px,
		linear-gradient(var(--line), var(--line)) 0 100% / 20px 2px,
		linear-gradient(var(--line), var(--line)) 0 100% / 2px 8px,
		linear-gradient(var(--line), var(--line)) 100% 100% / 20px 2px,
		linear-gradient(var(--line), var(--line)) 100% 100% / 2px 8px;
	background-repeat: no-repeat;
}

/* Animation controls */
.animate {
	flex: none;
	display: grid;
	grid-template-columns: 118px 138px 120px 138px 1fr;
	grid-template-rows: 32px 32px 44px;
	column-gap: 16px;
	row-gap: 16px;
	align-items: center;
	height: 163px;
	padding: 16px 10px 0 0;
}

.animate > label {
	text-align: right;
}

.animate input[type=text] {
	background: #333;
}

.animate .bare {
	justify-self: center;
}

.animate .checks {
	grid-column: 3 / 5;
	display: flex;
	padding-left: 4px;
}

.checks .check {
	width: 168px;
}

.checks .check:last-child {
	width: auto;
}

.track {
	grid-column: 1 / 4;
	appearance: none;
	height: 5px;
	margin: 0 6px 0 24px;
	border-radius: 3px;
	background: #3c3c3c;
}

.track::-webkit-slider-thumb {
	appearance: none;
	width: 26px;
	height: 26px;
	border-radius: 50%;
	background: #999;
}

/* Data table */
.data {
	border-right: 2px solid black;
}

.table-wrap {
	flex: 1;
	min-height: 0;
	padding-top: 6px;
	overflow: hidden;
	border-bottom: 2px solid #363636;
}

table {
	width: 100%;
	table-layout: fixed;
	border-spacing: 0;
	font-size: 26px;
}

thead td {
	width: 83px;
	padding: 0 0 0 10px;
}

thead th {
	padding: 3px 0;
	border: 2px solid #333;
	border-width: 2px 0;
	font-size: 24px;
	font-weight: 400;
	text-align: left;
}

thead th span {
	display: block;
	height: 38px;
	line-height: 38px;
	padding-left: 6px;
	border-right: 2px solid #d0d0d0;
}

.c-time { width: 96px; }
.c-freq { width: 199px; }
.c-trend { width: 152px; }
.c-prim { width: 212px; }

/* blank line between the header and the first row */
tbody::before {
	content: "";
	display: block;
	height: 6px;
}

tbody tr {
	height: 35px;
}

tbody tr:nth-child(3n) {
	height: 36px;
}

tbody th, tbody td {
	padding: 0 0 0 8px;
	background: #1e1e1e;
	line-height: 32px;
	text-align: left;
}

tbody tr:nth-child(even) > * {
	background: #292929;
}

tbody th {
	padding-left: 5px;
	border-left: 2px solid #363636;
	border-right: 8px solid var(--panel);
	font-weight: 700;
}

tbody td:nth-child(2) {
	padding-left: 6px;
	border-left: 2px solid #363636;
}

.status {
	flex: none;
	display: flex;
	align-items: center;
	gap: 24px;
	height: 42px;
	padding-left: 14px;
}

.status span {
	margin-left: 10px;
}

/* Inspector */
.inspector {
	flex: none;
	display: flex;
	flex-direction: column;
	gap: 4px;
	padding: 6px 85px 4px 6px;
	background: var(--well);
	border-bottom: 2px solid #111;
}

.card {
	display: grid;
	grid-template-columns: 40px 68px 102px 196px 204px 196px 312px 1fr;
	row-gap: 16px;
	align-items: center;
	padding: 12px 0;
	border: 2px solid var(--line);
	background: var(--row);
}

.card > * {
	grid-row: 1;
}

.card > .r2 {
	grid-row: 2;
}

.card > .chevron {
	grid-column: 1;
}

.card > .card-icon {
	grid-column: 2;
	grid-row: 1 / span 2;
	justify-self: center;
}

.single > .card-icon.card-icon {
	grid-row: 1;
	margin: -6px 0;
}

.swatch {
	width: 64px;
	height: 64px;
	background: #676d8e;
}

.l1 {
	grid-column: 3;
	padding-right: 17px;
	text-align: right;
	white-space: nowrap;
}

.c1 { grid-column: 4; }

.l2 {
	grid-column: 5;
	padding-right: 17px;
	text-align: right;
	white-space: nowrap;
}

.c2 { grid-column: 6; }
.wide { grid-column: 4 / 7; }

.rest {
	grid-column: 7 / 9;
	display: flex;
	align-items: center;
	height: 32px;
	padding-left: 20px;
}

.with-tool {
	display: flex;
	align-items: center;
	justify-content: space-between;
	padding-left: 5px;
}

.with-tool .plus {
	margin-left: 8px;
}

.pair {
	display: flex;
	align-items: center;
	justify-content: space-between;
	padding-left: 4px;
}

.pair input {
	width: 140px;
}

.near {
	margin-left: -15px;
}

.plus.near {
	margin-left: -7px;
}

.rest .handle:not(.near) {
	margin-left: 5px;
}

.rest > .well {
	margin-left: 36px;
}

.corner {
	margin: -4px 8px 0 auto;
}

.w128 { width: 128px; }
.w66 { width: 66px; }

.stack {
	width: 260px;
	margin-left: 97px;
}

.sizes {
	display: flex;
	justify-content: space-between;
	padding: 0 10px 0 20px;
}

.sizes input {
	width: 132px;
}

.splits {
	gap: 20px;
	padding-left: 136px;
}

.check.far {
	margin-left: 48px;
}

.hide-row {
	padding-left: 162px;
}

.hide-row .bare {
	margin-left: 20px;
}

.rest .check.small {
	width: 70px;
}

.rest > .handle + .check.small {
	margin-left: 7px;
}

.gear-end {
	margin-left: 20px;
}

.color-pop {
	gap: 4px;
	width: 52px;
	height: 32px;
	margin: 0 9px 0 -9px;
	border-radius: 8px;
	background: #666;
}

.color-pop i {
	width: 24px;
	height: 20px;
	border: 2px solid #f0e0dc;
	background: #d84a33;
}

.color-pop b {
	width: 16px;
	height: 20px;
	border-radius: 4px;
	background: #3470d8 url("data:image/svg+xml,%3Csvg xmlns='http://www.w3.org/2000/svg' width='16' height='20'%3E%3Cpath d='M4 8L8 4L12 8M4 12L8 16L12 12' fill='none' stroke='white' stroke-width='2'/%3E%3C/svg%3E");
}

.solid {
	background-image:
		linear-gradient(#e6e6e6, #e6e6e6),
		url("data:image/svg+xml,%3Csvg xmlns='http://www.w3.org/2000/svg' width='24' height='24'%3E%3Crect width='24' height='24' rx='6' fill='%233470d8'/%3E%3Cpath d='M8 10L12 6L16 10M8 14L12 18L16 14' fill='none' stroke='white' stroke-width='2'/%3E%3C/svg%3E");
	background-size: 130px 4px, 24px 24px;
	background-position: 12px center, right 4px center;
}

.card > .where {
	grid-column: 8;
	grid-row: 1 / span 2;
	justify-self: start;
	display: flex;
	flex-direction: column;
	gap: 4px;
	width: 122px;
	height: 80px;
	margin-left: -2px;
	padding: 0 0 2px 2px;
	border: 2px solid #f0f0f0;
	border-width: 0 0 2px 2px;
}

.where i {
	height: 36px;
	background: #585858;
}

.where .on {
	background: #bfbfbf;
}

.single > .where.where {
	grid-row: 1;
	height: 52px;
	margin-top: -10px;
	margin-bottom: -10px;
}

.single .where i {
	height: 24px;
}

/* Graph */
.canvas {
	flex: 1;
	min-height: 0;
	display: flex;
	align-items: center;
	justify-content: center;
	background: #262626;
	border-top: 2px solid #333;
}

.paper {
	width: 1080px;
	height: 756px;
	background: white;
}
```

FILE: graph.js
```javascript
// First measured values, the rest is built from the components and the noise
const FREQ = [
	101.0055, 110.7436, 117.622, 122.3865, 121.8232, 120.4581, 121.2496, 121.4252, 120.2785, 120.9596,
	120.4655, 116.4559, 110.045, 109.2506, 106.4216, 108.313, 112.7188, 116.2585, 116.6844, 115.1102,
	110.377, 107.6466, 105.2545, 102.3111, 103.0178, 106.2397, 105.6876, 103.8543, 105.0065, 107.0146,
	111.0573, 122.0915, 130.5508, 139.7296, 146.1705, 147.7698, 147.4561, 144.7045, 144.3368, 145.1722
];
const NOISE = [
	0, 0.3, -1.2, -1, -1.2, 0, -1.2, 0.9, -0.2, 0.6, 0.1, -0.3, 0.3, -0.2, 0.6, -0.4, -0.6, -0.8, -0.2, 0.9,
	-1.2, 1.2, -1.4, -0.2, 1, 0.6, 0.9, -0.6, -0.7, -0.6, -1, 1, 0.1, -1.4, 1.1, 0.2, 0.5, 1, -0.3, -0.3,
	1, 1.3, 1.3, -0.9, -0.8, 0.4, -0.2, 0.5, -0.5, 0.1, -0.5, -1.4, 0.9, 0.1, -1, -1.2, 0.7, -0.2, -0.7, -0.2, 0.7
];

const COLORS = {
	frequency: '#d84a33',
	trend: '#57ab8c',
	primaryOsc: '#cc7e33',
	secondaryOsc: '#8b87bb',
	fastOsc: '#d9589c',
	noise: '#85ad45'
};

const data = { frequency: [], trend: [], primaryOsc: [], secondaryOsc: [], fastOsc: [], noise: [] };
for (let t = 0; t <= 100; t++) {
	const trend = 0.8 * t;
	const primary = 15 * Math.sin(0.2 * t);
	const secondary = 8 * Math.sin(0.4 * t);
	const fast = 4 * Math.sin(0.8 * t);
	const sum = 100 + trend + primary + secondary + fast;
	const noise = t < 40 ? FREQ[t] - sum : NOISE[t - 40];
	data.trend.push(trend);
	data.primaryOsc.push(primary);
	data.secondaryOsc.push(secondary);
	data.fastOsc.push(fast);
	data.noise.push(noise);
	data.frequency.push(sum + noise);
}

function short(v) {
	return String(Number(v.toFixed(4)));
}

// Table rows
let rows = '';
for (let t = 0; t < 40; t++) {
	rows += `<tr><th scope="row">${t + 1}</th><td>${t}</td><td>${short(data.frequency[t])}</td><td>${short(data.trend[t])}</td>` +
		`<td>${short(data.primaryOsc[t])}</td><td>${short(data.secondaryOsc[t])}</td></tr>`;
}
document.getElementById('rows').innerHTML = rows;

const icon = (name, w, h) => `<svg width="${w}" height="${h}"><use href="#i-${name}"/></svg>`;
const chevron = `<button class="bare chevron">${icon('chevron', 12, 18)}</button>`;
const gear = `<button class="bare gear">${icon('gear', 30, 30)}</button>`;

// Column list
['time', 'frequency', 'trend', 'primaryOsc', 'secondaryOsc', 'fastOsc', 'noise'].forEach(name => {
	document.getElementById('columns').insertAdjacentHTML('beforeend',
		`<div class="item">${chevron}<span class="col-icon">3</span><input type="text" value="${name}" aria-label="Column name">${gear}` +
		`<label class="check"><input type="checkbox" checked>Show</label><button class="bare">${icon('goto', 24, 24)}</button></div>`);
});

// Variable list
[['Rmin', '23.32'], ['Rmax', '59.6'], ['Rmid', '41.46'], ['min frequency', '101.0055'], ['max frequency', '196.444'], ['Rrange', '36.28']].forEach(([name, value]) => {
	document.getElementById('variables').insertAdjacentHTML('beforeend',
		`<div class="item">${chevron}<span class="hash">#.##</span><input type="text" value="${name}" aria-label="Variable name">${gear}<span class="value">${value}</span></div>`);
});

// ---- Graphs ----

function text(x, y, size, anchor, str, extra = '') {
	return `<text x="${x}" y="${y}" font-size="${size}" text-anchor="${anchor}" dominant-baseline="central" ${extra}>${str}</text>`;
}

function line(x1, y1, x2, y2, extra = '') {
	return `<path d="M${x1} ${y1}L${x2} ${y2}" ${extra}/>`;
}

// One frame: axes, optional range, series
function frame(o) {
	const px = v => o.x + v / 100 * o.w;
	const py = v => o.y + (o.max - v) / (o.max - o.min) * o.h;
	const bottom = o.y + o.h;
	let s = '';
	if (o.range) {
		s += `<rect x="${px(23.32)}" y="${o.y}" width="${px(59.6) - px(23.32)}" height="${o.h + (o.rangeExtra || 0)}" fill="#cdd3f0"/>`;
	}
	let ticks = '';
	for (let v = Math.ceil(o.min / o.minor) * o.minor; v <= o.max; v += o.minor) {
		const major = v % o.step === 0;
		ticks += `M${o.x} ${py(v)}h${major ? -o.tick : -o.tick / 2}`;
		if (major) {
			s += text(o.x - o.labelGap, py(v), o.font, 'end', v < 0 ? '\u2212' + -v : v);
		}
	}
	if (o.xAxis) {
		for (let v = 0; v <= 100; v += o.xMinor) {
			const major = v % 10 === 0;
			ticks += `M${px(v)} ${bottom}v${major ? o.tick : o.tick / 2}`;
			if (major) {
				s += text(px(v), bottom + o.xLabelGap, o.font, 'middle', v);
			}
		}
		s += text(px(50), bottom + o.xTitleGap, o.font, 'middle', 'Time (Hrs)');
	}
	s += text(0, 0, o.font, 'middle', o.title, `transform="translate(${o.titleX} ${o.titleY || o.y + o.h / 2}) rotate(-90)"`);
	if (o.base) {
		s += line(o.x, py(100), o.x + o.w, py(100), `stroke="${o.ink}" stroke-width="${o.axis}" stroke-dasharray="${o.dash}"`);
	}
	o.series.forEach(name => {
		s += `<polyline fill="none" stroke="${COLORS[name]}" stroke-width="${o.stroke}" points="${data[name].map((v, t) => px(t) + ',' + py(v)).join(' ')}"/>`;
	});
	s += `<path d="${ticks}M${o.x} ${o.y}h${o.w}v${o.h}h${-o.w}z" fill="none" stroke="${o.ink}" stroke-width="${o.axis}"/>`;
	return s;
}

function legend(x, y, w, h, font, pitch, pad, stroke, ink) {
	let s = `<rect x="${x}" y="${y}" width="${w}" height="${h}" fill="white" stroke="${ink}" stroke-width="${stroke / 2}"/>`;
	const top = y + pitch * 0.65;
	s += text(x + pad, top, font, 'start', 'Components');
	['trend', 'primaryOsc', 'secondaryOsc', 'fastOsc', 'noise'].forEach((name, i) => {
		const ly = top + pitch * (i + 1);
		s += line(x + pad, ly, x + pad + font * 1.2, ly, `stroke="${COLORS[name]}" stroke-width="${stroke}"`);
		s += text(x + pad + font * 1.55, ly, font, 'start', name);
	});
	return s;
}

function arrows(x1, x2, y, gap1, gap2, size, ink) {
	return line(x1, y, gap1, y, `stroke="${ink}" stroke-width="${size / 8}"`) + line(gap2, y, x2, y, `stroke="${ink}" stroke-width="${size / 8}"`) +
		`<path d="M${x1} ${y}l${size} ${-size / 2}l${-size / 3} ${size / 2}l${size / 3} ${size / 2}z" fill="${ink}"/>` +
		`<path d="M${x2} ${y}l${-size} ${-size / 2}l${size / 3} ${size / 2}l${-size / 3} ${size / 2}z" fill="${ink}"/>`;
}

const OSC = ['trend', 'primaryOsc', 'secondaryOsc', 'fastOsc'];
const ALL = OSC.concat('noise');

// Publication version: Times, two stacked frames
function publication(heading) {
	const base = { x: 99, w: 950, tick: 15, labelGap: 22, font: 24, axis: 2, ink: '#111', stroke: 3, titleX: 17 };
	const mid = 99 + 9.5 * 41.46;
	return '<g font-family="Liberation Serif, serif" fill="#000">' +
		frame({ ...base, y: 18, h: 311, min: 0, max: 220, minor: 10, step: 50, title: 'Total Frequency (Hz)', range: true, base: true, dash: '24 15', series: ['frequency'] }) +
		text(114, 51, 26, 'start', 'A)', 'font-weight="bold"') +
		(heading ? text(mid, 82, 30, 'middle', heading) : '') +
		text(mid, 300, 24, 'middle', '36.28 (hrs)') +
		arrows(321, 665, 300, 433, 553, 16, '#000') +
		text(1021, 275, 24, 'end', 'Minimum = 101.0 Hz') +
		text(1021, 303, 24, 'end', 'Maximum = 196.4 Hz') +
		frame({ ...base, y: 356, h: 312, min: -25, max: 90, minor: 10, step: 20, title: 'Frequency (Hz)', xAxis: true, xMinor: 5, xLabelGap: 29, xTitleGap: 64, series: ALL }) +
		text(114, 388, 26, 'start', 'B)', 'font-weight="bold"') +
		legend(846, 386, 167, 158, 21, 25, 7, 4, '#000') +
		'</g>';
}

function thumb(body) {
	return `<g font-family="Noto Sans, sans-serif" fill="#333">${body}</g>`;
}

const small = { x: 36, w: 349, y: 3, h: 170, tick: 3, labelGap: 5, font: 7, axis: 1, ink: '#555', stroke: 1, titleX: 3,
	title: 'Frequency (Hz)', titleY: 90, xAxis: true, xMinor: 1, xLabelGap: 7, xTitleGap: 16 };
const half = { ...small, x: 32, w: 354, labelGap: 4, titleX: 3, font: 6 };
const smallMid = small.x + small.w * 0.4146;
const halfMid = half.x + half.w * 0.4146;

const GRAPHS = {
	'thumb-plot': thumb(frame({ ...small, min: 90, max: 210, minor: 5, step: 10, series: ['frequency'] })),
	'thumb-multi': thumb(frame({ ...small, min: -25, max: 90, minor: 5, step: 10, stroke: 1.5, series: OSC })),
	'thumb-range': thumb(frame({ ...small, min: 0, max: 220, minor: 10, step: 20, range: true, base: true, dash: '4 2', series: ['frequency'] }) +
		text(smallMid, 37, 10, 'middle', 'Key Range') + text(smallMid, 150, 7, 'middle', '36.28 (hrs)') +
		arrows(118, 244, 158, 180, 180, 4, '#223') +
		text(378, 150, 7, 'end', 'Minimum = 101.0 Hz') + text(378, 157, 7, 'end', 'Maximum = 196.4 Hz')),
	'thumb-legend': thumb(frame({ ...small, min: -25, max: 90, minor: 5, step: 10, series: ALL }) +
		legend(322, 7, 60, 47, 7, 8, 3, 1, '#444')),
	'thumb-combine': thumb(frame({ ...half, y: 2, h: 84, min: 0, max: 220, minor: 10, step: 50, title: 'Total Frequency (Hz)', titleY: 42, xAxis: false, range: true, rangeExtra: 90, base: true, dash: '3 2', series: ['frequency'] }) +
		arrows(115, 243, 78, 161, 195, 4, '#223') + text(halfMid, 78, 6, 'middle', '36.28 (hrs)') +
		text(374, 74, 6, 'end', 'Minimum = 101.0 Hz') + text(374, 80, 6, 'end', 'Maximum = 196.4 Hz') +
		frame({ ...half, y: 92, h: 84, min: -25, max: 90, minor: 10, step: 20, titleY: 134, series: ALL, xLabelGap: 6, xTitleGap: 14 }) +
		legend(337, 96, 45, 36, 5, 6, 2, 1, '#444')),
	'thumb-final': publication(''),
	'paper': publication('Key Range')
};

for (const id in GRAPHS) {
	document.getElementById(id).innerHTML = GRAPHS[id];
}
```
